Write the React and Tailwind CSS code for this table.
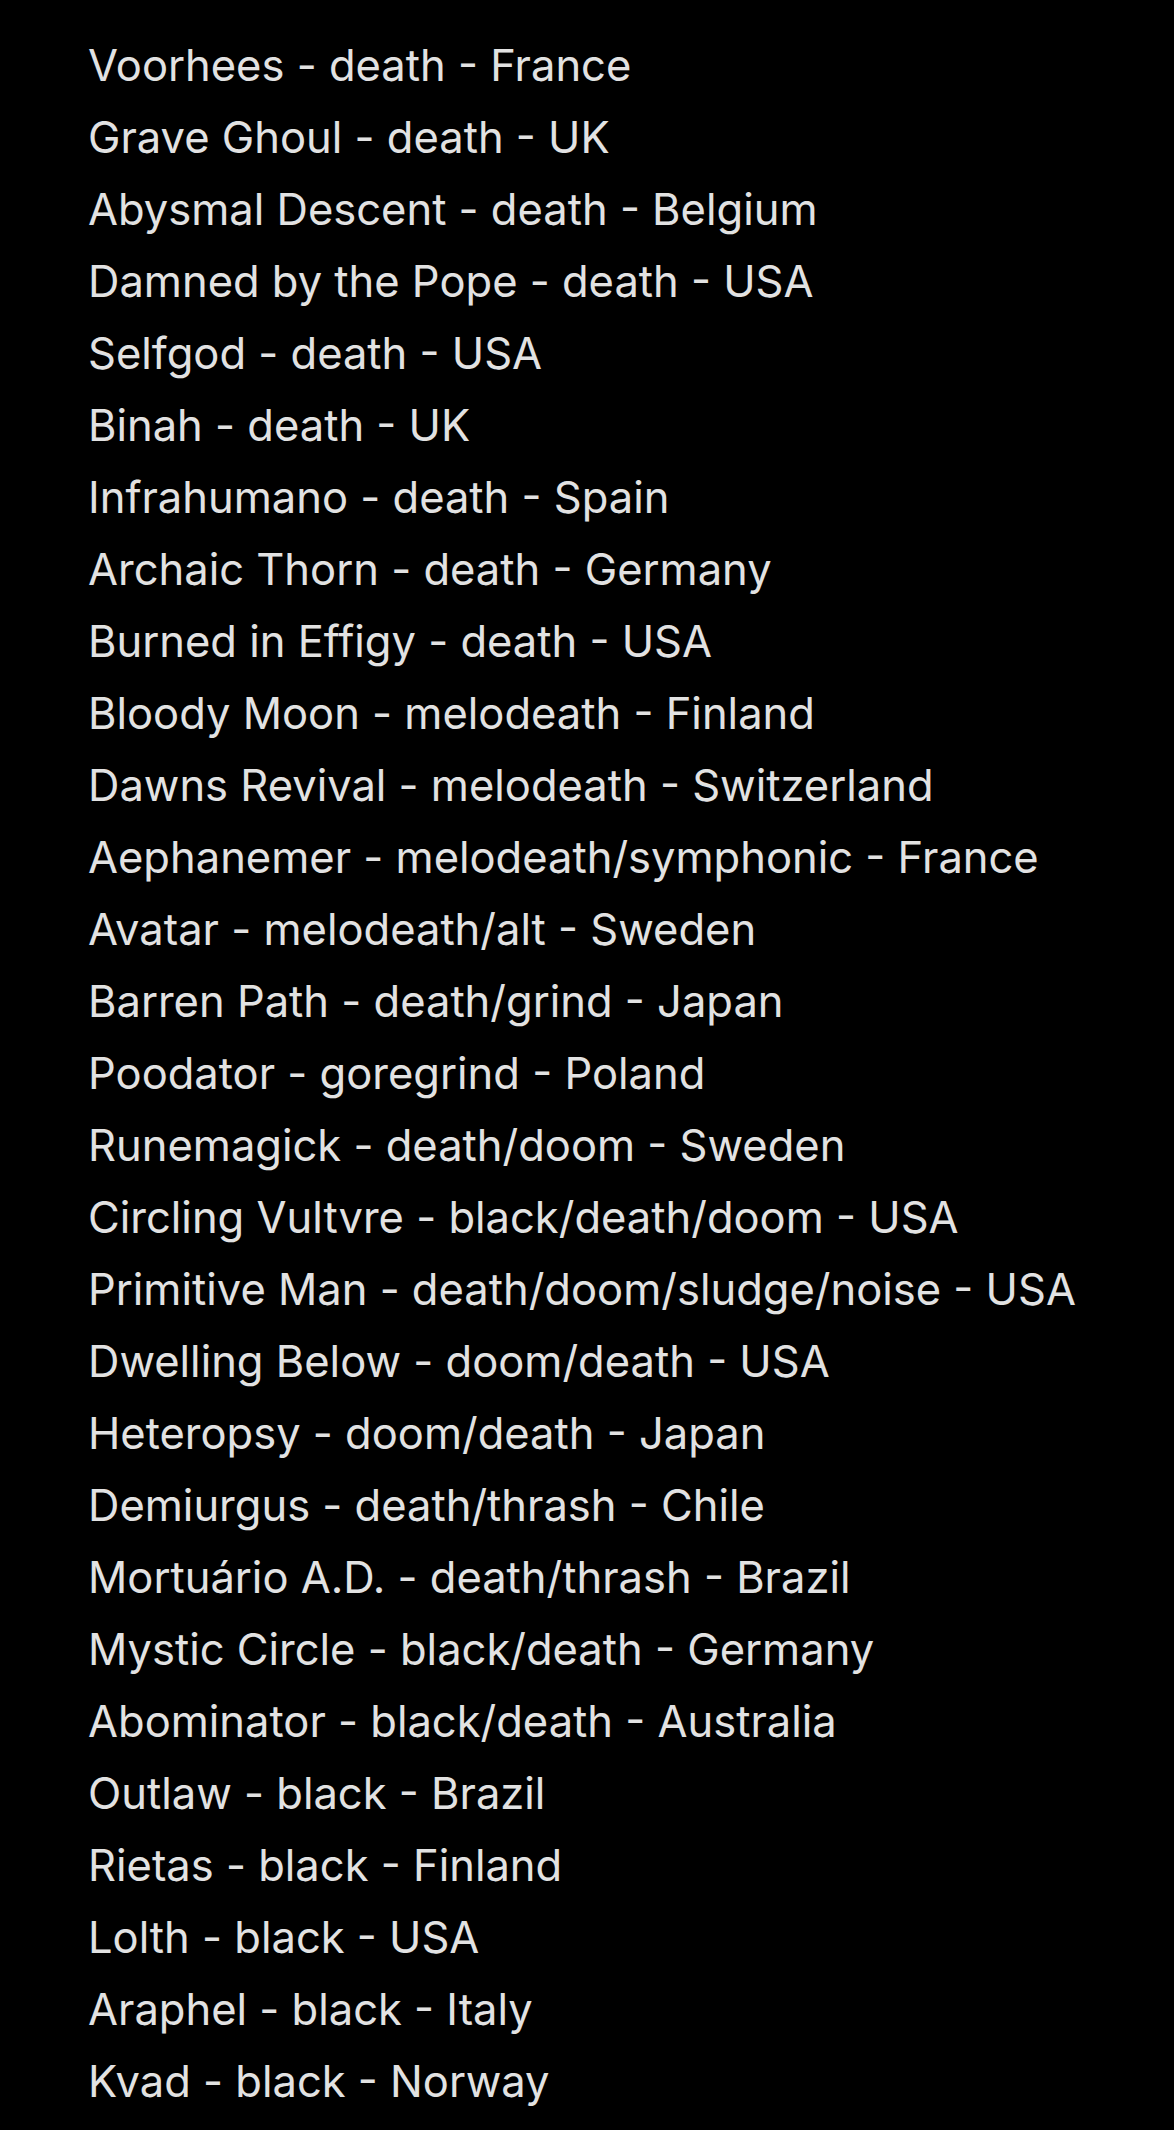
const items = [
  "Voorhees - death - France",
  "Grave Ghoul - death - UK",
  "Abysmal Descent - death - Belgium",
  "Damned by the Pope - death - USA",
  "Selfgod - death - USA",
  "Binah - death - UK",
  "Infrahumano - death - Spain",
  "Archaic Thorn - death - Germany",
  "Burned in Effigy - death - USA",
  "Bloody Moon - melodeath - Finland",
  "Dawns Revival - melodeath - Switzerland",
  "Aephanemer - melodeath/symphonic - France",
  "Avatar - melodeath/alt - Sweden",
  "Barren Path - death/grind - Japan",
  "Poodator - goregrind - Poland",
  "Runemagick - death/doom - Sweden",
  "Circling Vultvre - black/death/doom - USA",
  "Primitive Man - death/doom/sludge/noise - USA",
  "Dwelling Below - doom/death - USA",
  "Heteropsy - doom/death - Japan",
  "Demiurgus - death/thrash - Chile",
  "Mortuário A.D. - death/thrash - Brazil",
  "Mystic Circle - black/death - Germany",
  "Abominator - black/death - Australia",
  "Outlaw - black - Brazil",
  "Rietas - black - Finland",
  "Lolth - black - USA",
  "Araphel - black - Italy",
  "Kvad - black - Norway",
];

export default function App() {
  return (
    <div className="w-[1174px] h-[2130px] bg-black overflow-hidden pt-[29px] pl-[88px]">
      <div className="flex flex-col font-['Inter',sans-serif] text-[43.5px] leading-[72px] text-[#e2e2e2] font-normal">
        {items.map((t, i) => (
          <div key={i} className="whitespace-nowrap">{t}</div>
        ))}
      </div>
    </div>
  );
}
